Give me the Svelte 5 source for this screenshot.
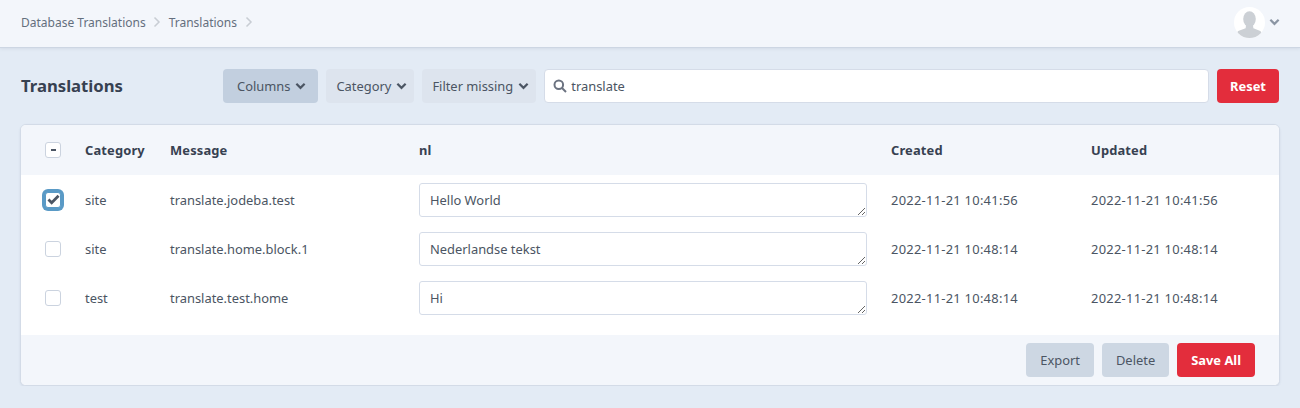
<script>
  let rows = [
    { id: 1, category: 'site', message: 'translate.jodeba.test', nl: 'Hello World', created: '2022-11-21 10:41:56', updated: '2022-11-21 10:41:56', checked: true },
    { id: 2, category: 'site', message: 'translate.home.block.1', nl: 'Nederlandse tekst', created: '2022-11-21 10:48:14', updated: '2022-11-21 10:48:14', checked: false },
    { id: 3, category: 'test', message: 'translate.test.home', nl: 'Hi', created: '2022-11-21 10:48:14', updated: '2022-11-21 10:48:14', checked: false }
  ]
  let filters = [
    { label: 'Columns', active: true },
    { label: 'Category', active: false },
    { label: 'Filter missing', active: false }
  ]
</script>

<header class="topbar">
  <nav class="crumbs">
    <a href="#db">Database Translations</a>
    <svg class="sep" viewBox="0 0 8 12" width="8" height="12"><path d="M1.5 1.5 6 6l-4.500 4.500" /></svg>
    <a href="#tr">Translations</a>
    <svg class="sep" viewBox="0 0 8 12" width="8" height="12"><path d="M1.5 1.5 6 6l-4.500 4.500" /></svg>
  </nav>
  <div class="user">
    <svg class="avatar" viewBox="0 0 32 32" width="31" height="31">
      <defs><clipPath id="circ"><circle cx="16" cy="16" r="16" /></clipPath></defs>
      <circle cx="16" cy="16" r="16" fill="#fff" />
      <g clip-path="url(#circ)" fill="#ccd0d5">
        <ellipse cx="16" cy="12.500" rx="6.500" ry="8.200" />
        <path d="M12.500 18h7l.5 4 6.500 2.500c1.500.7 2 2 2 4V33H3v-4.500c0-2 .5-3.300 2-4l7-2.500z" />
      </g>
    </svg>
    <svg class="chev grey" viewBox="0 0 12 8" width="11" height="8"><path d="M1.500 1.500 6 6l4.500-4.500" /></svg>
  </div>
</header>

<main class="page">
  <div class="toolbar">
    <h1>Translations</h1>
    <div class="filters">
      {#each filters as f}
        <button class="filter" class:active={f.active}>
          {f.label}
          <svg class="chev" viewBox="0 0 12 8" width="11" height="8"><path d="M1.500 1.500 6 6l4.500-4.500" /></svg>
        </button>
      {/each}
      <div class="search">
        <svg viewBox="0 0 14 14" width="14" height="14"><circle cx="5.800" cy="5.800" r="4.300" /><path d="m9 9 4 4" /></svg>
        <input type="text" value="translate" />
      </div>
      <button class="btn red reset">Reset</button>
    </div>
  </div>

  <section class="card">
    <table>
      <colgroup>
        <col class="c-check" /><col class="c-cat" /><col class="c-msg" /><col class="c-nl" /><col class="c-date" /><col class="c-date2" />
      </colgroup>
      <thead>
        <tr>
          <th class="check"><span class="box minus"><i></i></span></th>
          <th>Category</th>
          <th>Message</th>
          <th>nl</th>
          <th>Created</th>
          <th>Updated</th>
        </tr>
      </thead>
      <tbody>
        {#each rows as r (r.id)}
          <tr>
            <td class="check">
              <span class="box" class:focus={r.checked}>
                {#if r.checked}
                  <svg viewBox="0 0 14 12" width="13" height="11"><path d="M1.500 6 5 9.500l7.500-7.500" /></svg>
                {/if}
              </span>
            </td>
            <td>{r.category}</td>
            <td>{r.message}</td>
            <td class="edit"><textarea value={r.nl}></textarea></td>
            <td class="date">{r.created}</td>
            <td class="date">{r.updated}</td>
          </tr>
        {/each}
      </tbody>
    </table>
    <footer class="actions">
      <button class="btn grey">Export</button>
      <button class="btn grey">Delete</button>
      <button class="btn red">Save All</button>
    </footer>
  </section>
</main>

<style>
  :global(body) {
    margin: 0;
    background: #e3ebf5;
    color: #4b5563;
    font-family: "Noto Sans", "Open Sans", sans-serif;
    font-size: 12.900px;
  }
  .topbar {
    height: 47px;
    display: flex;
    align-items: center;
    justify-content: space-between;
    padding: 0 20px 0 21px;
    background: #f3f6fb;
    border-bottom: 1px solid #cdd6e3;
    box-shadow: 0 1px 3px rgba(100, 116, 139, .12);
  }
  .crumbs {
    display: flex;
    align-items: center;
    gap: 7.500px;
    margin-top: -3px;
  }
  .crumbs a {
    color: #646f7e;
    text-decoration: none;
    font-size: 12px;
  }
  .sep path {
    fill: none;
    stroke: #c8cdd4;
    stroke-width: 1.500;
  }
  .user {
    display: flex;
    align-items: center;
    gap: 4px;
    margin-top: -3px;
  }
  .avatar {
    display: block;
  }
  .chev path {
    fill: none;
    stroke: #4b5563;
    stroke-width: 2.400;
  }
  .chev.grey path {
    stroke: #8b95a3;
  }
  .page {
    padding: 21px 20px 0;
  }
  .toolbar {
    display: flex;
    align-items: center;
    justify-content: space-between;
    height: 34px;
    margin-bottom: 21px;
    padding-left: 1px;
  }
  h1 {
    margin: 0 0 2px;
    font-size: 16.700px;
    font-weight: 700;
    color: #374151;
  }
  .filters {
    display: flex;
    gap: 8px;
    width: 1057px;
  }
  button {
    font-family: inherit;
    font-size: 12.900px;
    border: 0;
    border-radius: 4px;
    height: 34px;
    color: #4b5563;
    cursor: pointer;
  }
  .filter {
    display: flex;
    align-items: center;
    gap: 5px;
    padding: 0 7px 0 10px;
    background: #dde4ee;
    white-space: nowrap;
  }
  .filter.active {
    background: #c2cfdf;
    padding: 0 12px 0 14px;
  }
  .search {
    flex: 1;
    display: flex;
    align-items: center;
    gap: 4px;
    padding: 0 8px;
    background: #fff;
    border: 1px solid #d5dce8;
    border-radius: 4px;
  }
  .search svg {
    flex: none;
  }
  .search circle,
  .search path {
    fill: none;
    stroke: #6b7280;
    stroke-width: 2;
  }
  .search input {
    flex: 1;
    min-width: 0;
    border: 0;
    outline: 0;
    padding: 0;
    font: inherit;
    color: #4b5563;
    background: none;
  }
  .btn {
    padding: 0 14px;
  }
  .btn.red {
    background: #e32d3c;
    color: #fff;
    font-weight: 700;
  }
  .btn.grey {
    background: #cdd7e3;
  }
  .reset {
    width: 62px;
    margin-right: 1px;
    padding: 0;
    flex: none;
  }
  .card {
    background: #fff;
    border: 1px solid #d3dbe7;
    border-radius: 6px;
    overflow: hidden;
    box-shadow: 0 1px 2px rgba(100, 116, 139, .15);
  }
  table {
    width: 100%;
    border-collapse: collapse;
    table-layout: fixed;
  }
  .c-check { width: 52px; }
  .c-cat { width: 85px; }
  .c-msg { width: 249px; }
  .c-nl { width: 472px; }
  .c-date { width: 200px; }
  th {
    height: 50px;
    padding: 0 12px;
    text-align: left;
    font-weight: 700;
    color: #374151;
    background: #f3f6fb;
    box-sizing: border-box;
    letter-spacing: .15px;
  }
  td {
    padding: 0 12px;
    height: 49px;
    box-sizing: border-box;
    white-space: nowrap;
  }
  td.date {
    letter-spacing: .27px;
  }
  tbody::after {
    content: "";
    display: block;
    height: 13px;
  }
  th.check,
  td.check {
    padding: 0 0 0 24px;
  }
  .box {
    display: flex;
    align-items: center;
    justify-content: center;
    box-sizing: border-box;
    width: 16px;
    height: 16px;
    background: #fff;
    border: 1px solid #cbd3df;
    border-radius: 3px;
  }
  .box i {
    display: block;
    width: 5px;
    height: 2px;
    background: #4b5563;
  }
  .box.focus {
    border-color: #5a9ac6;
    box-shadow: 0 0 0 3px #5a9ac6;
  }
  .box svg path {
    fill: none;
    stroke: #4b5563;
    stroke-width: 3;
  }
  textarea {
    display: block;
    box-sizing: border-box;
    width: 448px;
    height: 34px;
    padding: 7px 10px;
    border: 1px solid #d5dce8;
    border-radius: 3px;
    font: inherit;
    color: #4b5563;
    outline: 0;
  }
  .actions {
    display: flex;
    justify-content: flex-end;
    gap: 8px;
    height: 50px;
    box-sizing: border-box;
    padding: 8px 24px 8px 0;
    background: #f3f6fb;
  }
</style>
